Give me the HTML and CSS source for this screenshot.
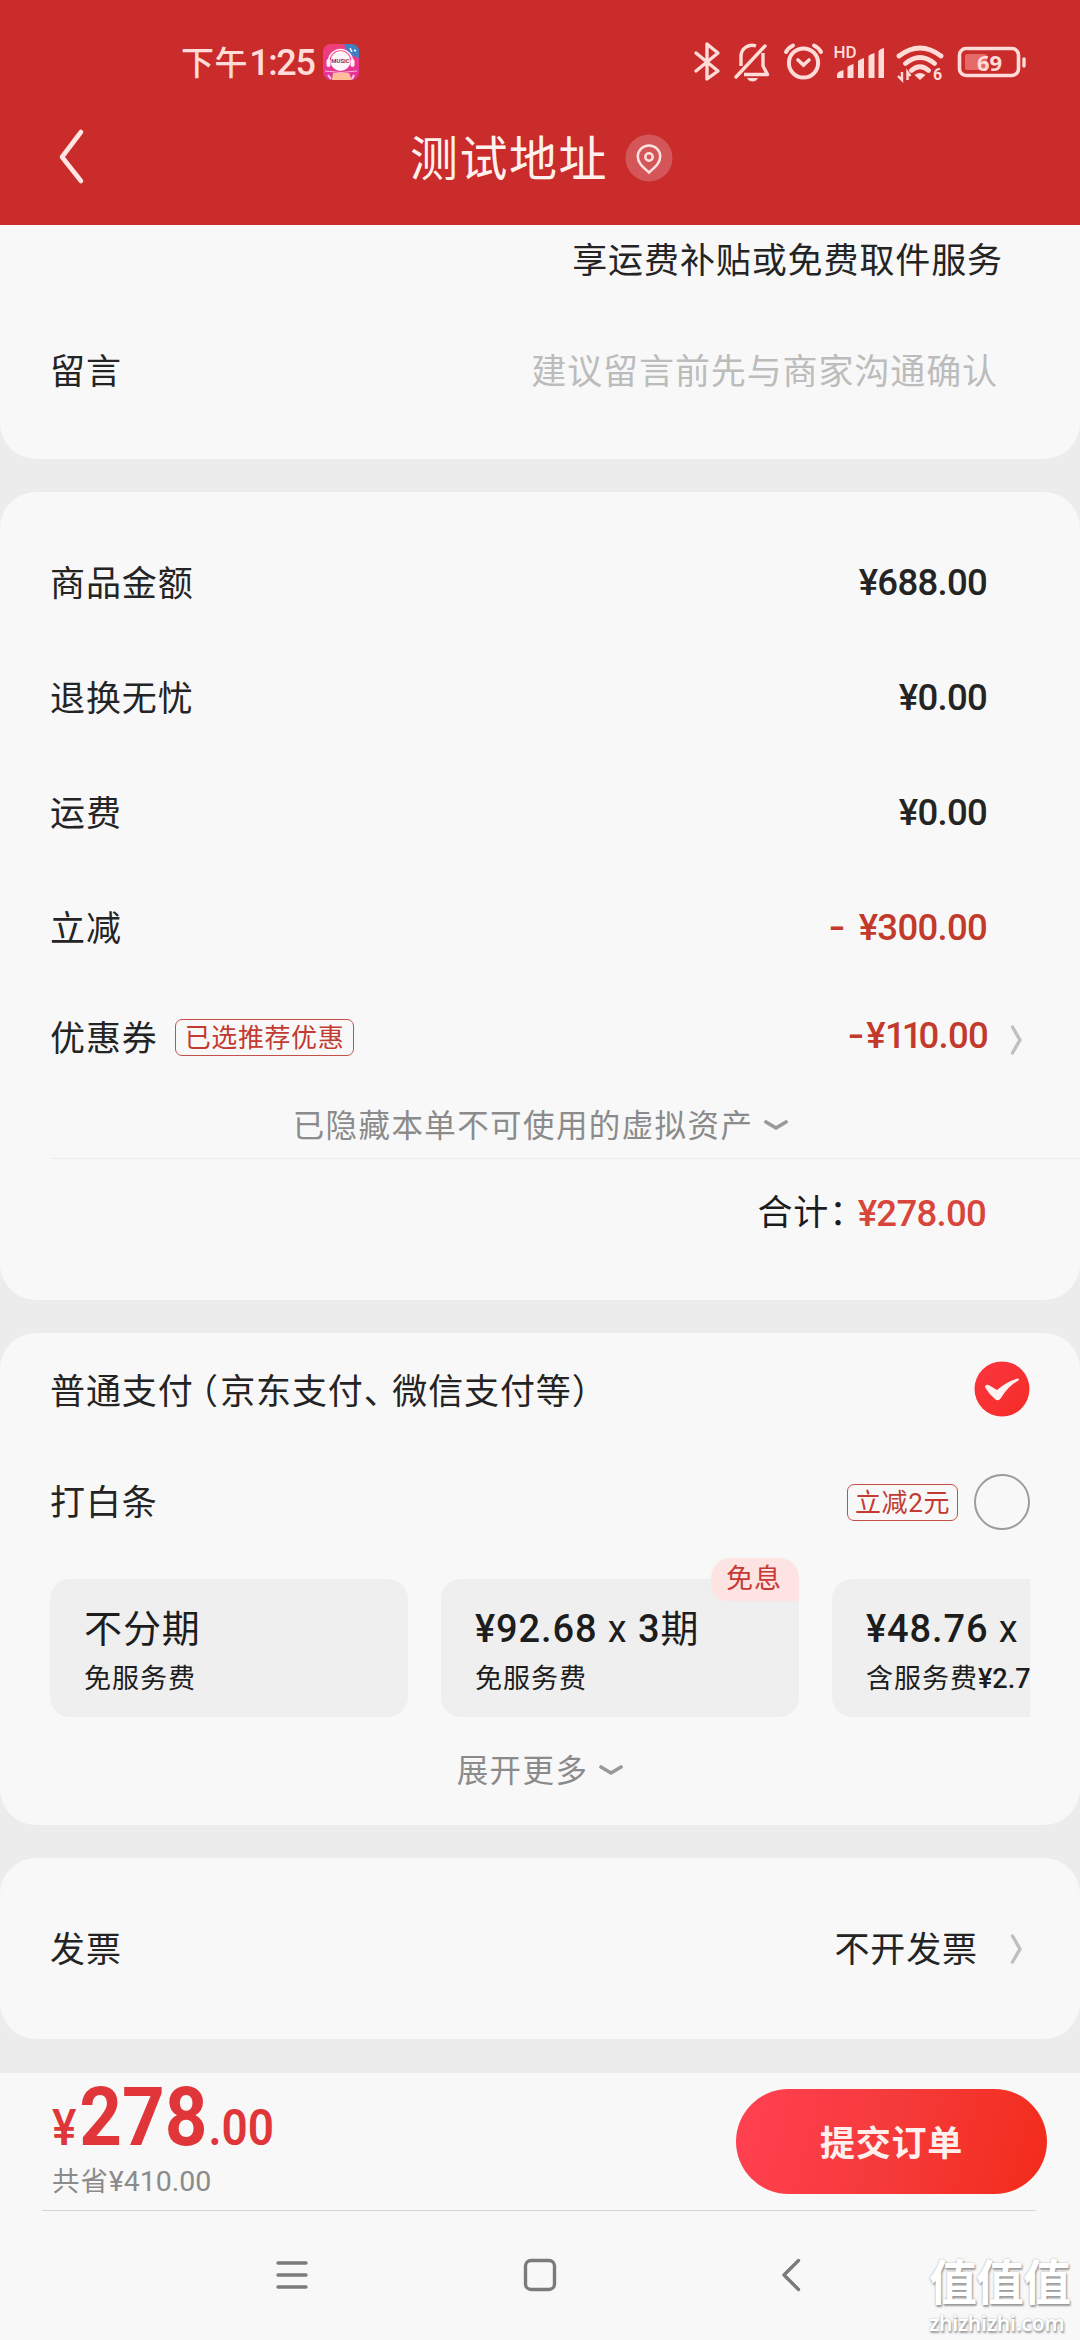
FILE: index.html
```html
<!DOCTYPE html>
<html lang="zh-CN">
<head>
<meta charset="utf-8">
<title>测试地址</title>
<link rel="stylesheet" href="styles.css">
</head>
<body>
<header class="header">
  <div class="status">
    <span class="clock">下午<span class="clock-num">1:25</span></span>
    <svg class="app-icon" width="36" height="36" viewBox="0 0 36 36">
      <defs><linearGradient id="app" x1="0" y1="0" x2="0" y2="1"><stop offset="0" stop-color="#f0407a"/><stop offset="1" stop-color="#e5309c"/></linearGradient></defs>
      <rect width="36" height="36" rx="8" fill="url(#app)"/>
      <path d="M21 0h7q8 0 8 8v6Q24 12 21 0z" fill="#3f7fc4"/>
      <path d="M27 4l2 4M31 6l2 1" stroke="#fff" stroke-width="1.5"/>
      <circle cx="17.500" cy="17" r="10" fill="#fff5fa"/>
      <path d="M5.500 18a12 12.500 0 0 1 24 0" fill="none" stroke="#fff0f6" stroke-width="1.600"/>
      <rect x="3.500" y="15" width="4" height="8" rx="2" fill="#fff0f6"/><rect x="27.500" y="15" width="4" height="8" rx="2" fill="#fff0f6"/>
      <text x="17.500" y="19" text-anchor="middle" class="music">MUSIC</text>
      <path d="M2 27q16 3 32 0" fill="none" stroke="#fbb6d5" stroke-width="1"/>
      <path d="M10 29h16l3 7H9z" fill="#ffbe9a"/>
      <path d="M5 31l3 4M31 31l-2 4" stroke="#ffd0e4" stroke-width="2"/>
    </svg>
    <svg class="status-icons" width="334" height="44" viewBox="693 40 334 44" fill="none" stroke="#ffdcd8" stroke-width="3.400">
      <path d="M696 53l22 18-11 8V44l11 9-22 18" stroke-linejoin="round" stroke-linecap="round"/>
      <path d="M741 66V56a11 11 0 0 1 15-10M763 53v13l4.500 8.500H744" stroke-linejoin="round"/>
      <path d="M736 77l29-31" stroke-linecap="round"/>
      <path d="M747 78h11q-2 3.500-5.500 3.500t-5.500-3.500z" fill="#ffdcd8" stroke="none"/>
      <circle cx="803.500" cy="63" r="14.600" stroke-width="4"/>
      <path d="M798 60l5.500 5 5.500-5" stroke-width="3.600" stroke-linecap="round"/>
      <path d="M786 52q2-4 7-6.500M821 52q-2-4-7-6.500" stroke-width="4" stroke-linecap="round"/>
      <g fill="#ffdcd8" stroke="none">
        <text x="833.500" y="58" class="hd">HD</text>
        <path d="M837 78v-3q0-3.500 6.500-5v8zM847.500 78V67q2-2 6-3v14zM858 78V61q2-2 6-3v20zM868.500 78V56q2-2 6-3v25zM878.500 78V51q2-2.500 5.500-3v30z"/>
      </g>
      <path d="M899 56q21-16 42 0M905.500 63.500q14.500-12 29 0M911.500 70.500q8.500-7.500 17 0" stroke-width="4.800" stroke-linecap="round"/>
      <path d="M914.500 75q5.500-4 11 0l-5.500 5z" fill="#ffdcd8" stroke="none"/>
      <path d="M902 72v8l-4-4M907.500 80v-8l3 4" stroke-width="2.400"/>
      <text x="933" y="80" class="six">6</text>
      <rect x="959.500" y="48.500" width="59" height="27" rx="6.500" stroke-width="3.600"/>
      <rect x="965" y="54" width="22" height="16" rx="2" fill="#e56a68" stroke="none"/>
      <text x="977" y="70.500" class="batt">69</text>
      <path d="M1024 59v7" stroke-width="3.400" stroke-linecap="round"/>
    </svg>
  </div>
  <div class="titlebar">
    <svg class="back" width="27" height="58" viewBox="0 0 27 58"><path d="M23 4L4 29l19 24" fill="none" stroke="#ffe6e2" stroke-width="4.600" stroke-linecap="round" stroke-linejoin="round"/></svg>
    <h1 class="title">测试地址</h1>
    <svg class="pin" width="48" height="48" viewBox="0 0 48 48"><circle cx="24" cy="24" r="23.500" fill="#d55658"/><path d="M24 38.500C18 33 12.800 29 12.800 22.500a11.200 11 0 0 1 22.400 0C35.200 29 30 33 24 38.500z" fill="none" stroke="#ffe3e0" stroke-width="2.500"/><circle cx="24" cy="23" r="3.700" fill="none" stroke="#ffe3e0" stroke-width="2.500"/></svg>
  </div>
</header>

<main class="cards">
  <section class="card card-note">
    <div class="service">享运费补贴或免费取件服务</div>
    <div class="row note"><span>留言</span><span class="placeholder">建议留言前先与商家沟通确认</span></div>
  </section>

  <section class="card card-price">
    <div class="row"><span>商品金额</span><span class="money">¥688.00</span></div>
    <div class="row"><span>退换无忧</span><span class="money">¥0.00</span></div>
    <div class="row"><span>运费</span><span class="money">¥0.00</span></div>
    <div class="row"><span>立减</span><span class="money red"><span class="minus wide">-</span>¥300.00</span></div>
    <div class="row coupon"><span>优惠券</span><span class="tag">已选推荐优惠</span><span class="money red push"><span class="minus">-</span>¥<span class="ones">11</span>0.00</span>
      <svg class="arrow" width="14" height="32" viewBox="0 0 14 32"><path d="M2.500 3l7.500 13-7.500 13"/></svg></div>
    <div class="more hidden-assets">已隐藏本单不可使用的虚拟资产<svg class="down" width="24" height="13" viewBox="0 0 24 13"><path d="M2 3l10 6 10-6"/></svg></div>
    <div class="total"><span class="total-label">合计<span class="half colon">：</span></span><span class="money light">¥278.00</span></div>
  </section>

  <section class="card card-pay">
    <div class="pay-row"><span class="label">普通支付<span class="half open">（</span>京东支付<span class="half comma">、</span>微信支付等<span class="half close">）</span></span>
      <svg width="56" height="56" viewBox="0 0 56 56"><defs><linearGradient id="chk" x1="0" y1="0" x2="1" y2="1"><stop offset="0" stop-color="#fa3640"/><stop offset="1" stop-color="#f52c26"/></linearGradient></defs><circle cx="28" cy="28" r="27.500" fill="url(#chk)"/><path d="M11 25.500q1-3 4.500-1L23 29Q32 21 43.500 17.500q2.500 0 .8 2Q34 25 27 37q-3 4-6 1Q15 33 11.500 27z" fill="#fff3f1"/></svg></div>
    <div class="pay-row baitiao"><span class="label">打白条</span><span class="tag tag-off">立减2元</span><span class="radio"></span></div>
    <div class="options">
      <div class="option"><div class="opt-title">不分期</div><div class="opt-sub">免服务费</div></div>
      <div class="option"><div class="opt-title"><b>¥92.68</b> x <b>3</b>期</div><div class="opt-sub">免服务费</div><span class="badge">免息</span></div>
      <div class="option"><div class="opt-title"><b>¥48.76</b> x</div><div class="opt-sub">含服务费<b>¥2.7</b></div></div>
    </div>
    <div class="more">展开更多<svg class="down" width="24" height="13" viewBox="0 0 24 13"><path d="M2 3l10 6 10-6"/></svg></div>
  </section>

  <section class="card card-invoice">
    <span class="label">发票</span><span class="label push">不开发票</span>
    <svg class="arrow" width="14" height="32" viewBox="0 0 14 32"><path d="M2.500 3l7.500 13-7.500 13"/></svg>
  </section>
</main>

<footer class="footer">
  <div class="checkout">
    <div class="sum">
      <div class="amount"><span class="yen">¥</span><span class="big">278</span><span class="cents">.00</span></div>
      <div class="saved">共省<span class="saved-num">¥410.00</span></div>
    </div>
    <button class="submit">提交订单</button>
  </div>
  <nav class="nav">
    <svg width="32" height="36" viewBox="0 0 32 36"><path d="M2 6h28M2 18h28M2 30h28"/></svg>
    <svg width="36" height="36" viewBox="0 0 36 36"><rect x="3.500" y="3.500" width="29" height="29" rx="5.500"/></svg>
    <svg width="22" height="36" viewBox="0 0 22 36"><path d="M18.500 3.500L4 18l14.500 14.500"/></svg>
  </nav>
  <div class="watermark"><div class="wm-cn">值值值</div><div class="wm-en">zhizhizhi.com</div></div>
</footer>
</body>
</html>
```
FILE: styles.css
```css
* { box-sizing: border-box; }
body {
  margin: 0;
  width: 1080px;
  height: 2340px;
  overflow: hidden;
  background: #ececec;
  color: #242424;
  font-family: Roboto, "Noto Sans CJK SC", sans-serif;
  font-size: 35px;
  line-height: 50px;
  letter-spacing: 0.9px;
  white-space: nowrap;
}
svg { display: block; flex: none; }

.header { height: 225px; background: #ca2b2b; color: #ffe8e4; padding-top: 40px; }
.status { display: flex; align-items: center; height: 44px; padding: 0 53px 0 181px; }
.clock { width: 142px; padding-top: 2px; font-size: 33px; font-weight: 500; letter-spacing: 0.6px; color: #ffdcd8; }
.clock-num { font-size: 36px; letter-spacing: -1.4px; margin-left: 1px; }
.status-icons { margin-left: auto; }
.music { font: 700 6px Roboto, sans-serif; fill: #92305c; letter-spacing: 0; }
.hd { font: 500 17px Roboto, sans-serif; letter-spacing: 0; }
.six { font: 700 16px Roboto, sans-serif; fill: #ffdcd8; stroke: none; letter-spacing: 0; }
.batt { font: 700 22px "Noto Sans", sans-serif; fill: #ffdcd8; stroke: none; letter-spacing: 0; }
.titlebar { display: flex; align-items: center; height: 60px; margin-top: 43px; padding-left: 58px; }
.title { margin: 0 0 0 325px; padding-top: 5px; width: 215px; font-size: 48px; font-weight: 400; line-height: 60px; letter-spacing: 1.5px; color: #fff1ed; }
.pin { transform: translateY(1px); }

.cards { display: flex; flex-direction: column; gap: 33px; height: 1814px; }
.card { background: #f8f8f8; border-radius: 36px; padding: 0 50px; }
.card-note { height: 234px; border-radius: 0 0 36px 36px; }
.service { text-align: right; padding: 12px 27px 0 0; }
.row { display: flex; align-items: center; height: 115px; padding-top: 7px; }
.row > :nth-child(2):last-child { margin-left: auto; }
.note { padding-right: 32px; padding-top: 11px; height: 163px; margin-top: -1px; }
.placeholder { color: #bcbcbc; }

.card-price { height: 808px; padding-top: 32px; padding-right: 0; }
.card-price .row { padding-right: 93px; }
.money { font-size: 36.5px; font-weight: 500; letter-spacing: -0.7px; }
.row .money { margin-bottom: 5px; }
.red { color: #c23a2b; }
.light { color: #d8453a; }
.minus { display: inline-block; width: 18px; transform: scaleX(1.3); transform-origin: left; }
.wide { width: 30px; }
.ones { letter-spacing: -4px; }
.card-price .coupon { height: 105px; padding-right: 56px; }
.push { margin-left: auto; }
.coupon .money { margin-bottom: 8px; }
.tag { border: 1.5px solid #c4504a; border-radius: 7px; color: #c23a31; font-size: 26px; height: 37px; line-height: 36px; padding: 0 9px; margin-left: 17px; letter-spacing: 0.6px; }
.coupon .tag { margin-bottom: 5px; }
.arrow { margin-left: 22px; fill: none; stroke: #bfbfbf; stroke-width: 3.4; stroke-linecap: round; }
.more { display: flex; align-items: center; justify-content: center; gap: 11px; padding-top: 5px; color: #8b8b8b; font-size: 31.5px; letter-spacing: 1.4px; }
.down { margin-bottom: 3px; fill: none; stroke: #999; stroke-width: 3.6; stroke-linecap: round; stroke-linejoin: round; }
.hidden-assets { height: 69px; margin-right: 49px; padding-top: 6px; }
.total { border-top: 1px solid #ededed; height: 107px; display: flex; align-items: center; justify-content: flex-end; padding: 3px 94px 0 0; color: #1c1c1c; }
.total-label { margin-bottom: 3px; }
.half { font-family: "Noto Sans CJK SC", sans-serif; font-feature-settings: "halt"; }
.colon { margin-right: 10px; }

.card-pay { height: 492px; }
.pay-row { display: flex; align-items: center; justify-content: space-between; height: 112px; }
.label { padding-top: 4px; }
.pay-row .label { padding-top: 3px; }
.open { margin-left: 7px; }
.open, .comma { letter-spacing: 2px; }
.comma { margin-right: 9px; }
.baitiao { height: 116px; padding-bottom: 2px; }
.tag-off { margin-left: auto; padding: 0 7px; }
.radio { width: 56px; height: 56px; border: 2px solid #9c9c9c; border-radius: 50%; margin-left: 16px; }
.options { display: flex; gap: 33px; height: 160px; padding-top: 21px; margin-top: -3px; overflow: hidden; }
.option { position: relative; flex: none; width: 358px; height: 138px; background: #efefef; border-radius: 20px; padding: 25px 34px 0; color: #1d1d1d; }
.option b { font-weight: 500; }
.opt-title { font-size: 38px; line-height: 50px; }
.opt-sub { font-size: 27px; line-height: 50px; letter-spacing: 1px; }
.opt-sub b { letter-spacing: 0; }
.badge { position: absolute; top: -21px; right: 0; width: 88px; height: 43px; border-radius: 20px 20px 0 16px; background: #fde3e2; color: #c63a34; font-size: 27px; line-height: 42px; padding-left: 15px; }
.card-pay .more { height: 102px; }

.card-invoice { height: 181px; display: flex; align-items: center; padding-right: 56px; }
.card-invoice .arrow { margin-left: 32px; }

.footer { position: relative; margin-top: 34px; height: 267px; background: #f8f8f8; }
.checkout { display: flex; justify-content: space-between; height: 138px; margin: 0 44px 0 42px; border-bottom: 1px solid #d6d6d6; }
.sum { padding-left: 10px; }
.amount { display: flex; align-items: baseline; color: #e0363a; height: 90px; line-height: 90px; transform: scaleX(0.92); transform-origin: left; letter-spacing: 0; }
.yen { font-size: 50px; font-weight: 500; margin-right: 3px; }
.big { font-size: 81px; font-weight: 700; }
.cents { font-size: 50px; font-weight: 600; margin-left: 1px; }
.saved { color: #8b8b8b; font-size: 27.5px; line-height: 38px; }
.saved-num { font-size: 28.5px; letter-spacing: 0; }
.submit { width: 311px; height: 105px; margin: 16px -11px 0 0; padding: 0 0 2px; border: 0; border-radius: 53px; background: linear-gradient(105deg, #ff4050 5%, #f53a3a 50%, #f32d1d 95%); color: #fff0ed; font: 700 35px "Noto Sans CJK SC", sans-serif; letter-spacing: 0.8px; }
.nav { display: flex; align-items: center; height: 128px; padding-left: 276px; fill: none; stroke: #7b7b7b; stroke-width: 3.4; stroke-linecap: round; stroke-linejoin: round; }
.nav :nth-child(2) { margin-left: 214px; }
.nav :nth-child(3) { margin-left: 222px; }
.watermark { position: absolute; left: 929px; top: 183px; width: 146px; color: #fff; text-shadow: 1px 2px 2px #999, 0 0 2px #aaa; }
.wm-cn { font-size: 48px; font-weight: 700; line-height: 56px; letter-spacing: -1px; }
.wm-en { font: 600 21px/22px "Noto Sans", sans-serif; letter-spacing: -0.2px; }
```
